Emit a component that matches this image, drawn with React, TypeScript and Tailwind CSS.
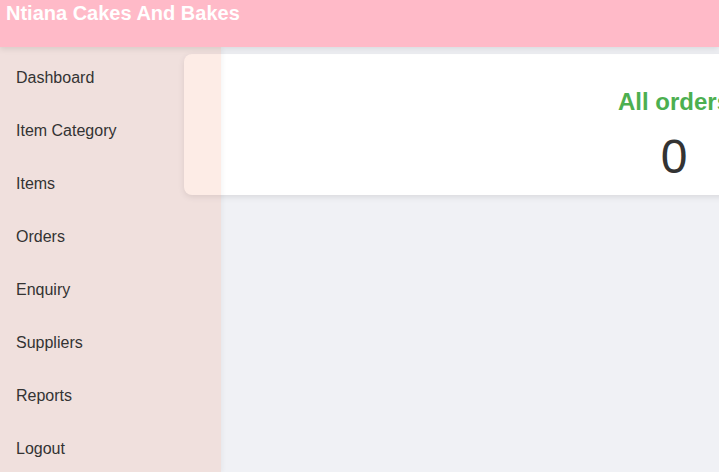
const links = ["Dashboard", "Item Category", "Items", "Orders", "Enquiry", "Suppliers", "Reports", "Logout"];

const App = () => {
  return (
    <div className="h-screen overflow-hidden bg-[#f0f1f5] font-['Liberation_Sans',Arial,sans-serif]">
      <header className="relative z-20 h-[47px] bg-[#ffbac8] px-[6px] shadow-[0_2px_6px_rgba(0,0,0,0.1)]">
        <h1 className="text-[20px] leading-[26px] font-bold text-white">Ntiana Cakes And Bakes</h1>
      </header>
      <div className="relative h-[425px]">
        <main className="pl-[184px] pt-[7px]">
          <div className="w-[980px] h-[141px] rounded-lg bg-white shadow-[0_2px_6px_rgba(0,0,0,0.1)] flex flex-col items-center pt-[34px]">
            <h2 className="text-[24px] leading-[28px] font-bold text-[#4caf50]">All orders</h2>
            <p className="mt-[13px] text-[48px] leading-[55px] text-[#333]">0</p>
          </div>
        </main>
        <aside className="absolute left-0 top-0 z-10 h-full w-[221px] bg-[rgba(240,128,88,0.15)] pt-[4px] shadow-[2px_0_4px_rgba(0,0,0,0.04)]">
          {links.map((l) => (
            <a key={l} href="#" className="flex h-[53px] items-center px-4 text-[16px] text-[#333]">
              {l}
            </a>
          ))}
        </aside>
      </div>
    </div>
  );
};

export default App;
